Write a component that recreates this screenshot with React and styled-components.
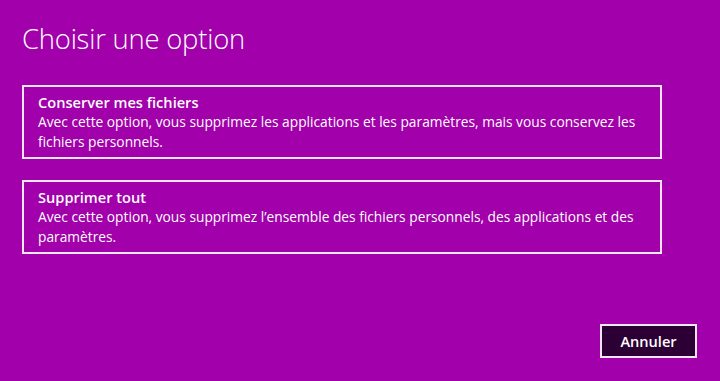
import styled, { createGlobalStyle } from 'styled-components';

const GlobalStyle = createGlobalStyle`
  html, body {
    margin: 0;
    padding: 0;
    background: #a100aa;
  }
  body {
    font-family: 'Open Sans', 'Noto Sans', sans-serif;
    color: #ffffff;
  }
`;

const Screen = styled.div`
  width: 720px;
  height: 381px;
  box-sizing: border-box;
  padding: 20px 23px 23px 22px;
  display: flex;
  flex-direction: column;
  background: #a100aa;
`;

const Title = styled.h1`
  margin: 0 0 27px 0;
  font-size: 27.4px;
  font-weight: 300;
  line-height: 38px;
  letter-spacing: -0.2px;
`;

const OptionList = styled.div`
  display: flex;
  flex-direction: column;
  gap: 21px;
  width: 640px;
`;

const Option = styled.div`
  box-sizing: border-box;
  height: 74px;
  border: 2px solid #f3e6f5;
  padding: 5px 14px 0 14px;
  cursor: pointer;
`;

const OptionTitle = styled.div`
  font-size: 14.6px;
  font-weight: 600;
  line-height: 20px;
`;

const OptionText = styled.div`
  font-size: 13.75px;
  line-height: 20px;
`;

const Footer = styled.div`
  display: flex;
  justify-content: flex-end;
  margin-top: auto;
`;

const CancelButton = styled.button`
  box-sizing: border-box;
  width: 97px;
  height: 34px;
  background: #2c0034;
  border: 2px solid #f3e6f5;
  color: #ffffff;
  font-family: 'Open Sans', 'Noto Sans', sans-serif;
  font-size: 14.6px;
  font-weight: 600;
  cursor: pointer;
`;

const options = [
  {
    title: 'Conserver mes fichiers',
    text: 'Avec cette option, vous supprimez les applications et les paramètres, mais vous conservez les fichiers personnels.',
  },
  {
    title: 'Supprimer tout',
    text: 'Avec cette option, vous supprimez l’ensemble des fichiers personnels, des applications et des paramètres.',
  },
];

export default function App() {
  return (
    <>
      <GlobalStyle />
      <Screen>
        <Title>Choisir une option</Title>
        <OptionList>
          {options.map((opt) => (
            <Option key={opt.title}>
              <OptionTitle>{opt.title}</OptionTitle>
              <OptionText>{opt.text}</OptionText>
            </Option>
          ))}
        </OptionList>
        <Footer>
          <CancelButton>Annuler</CancelButton>
        </Footer>
      </Screen>
    </>
  );
}
